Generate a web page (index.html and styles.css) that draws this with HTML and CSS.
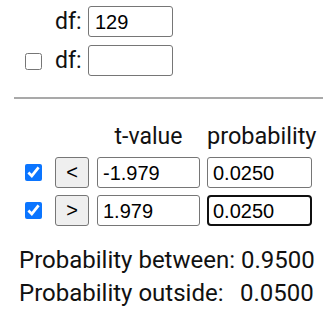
FILE: index.html
```html
<!DOCTYPE html>
<html lang="en">
<head>
  <meta charset="UTF-8">
  <title>t distribution</title>
  <link rel="stylesheet" href="styles.css">
</head>
<body>

  <div class="df-grid">
    <span></span>
    <label for="df1" class="df-label">df:</label>
    <input type="text" id="df1" class="box df-box" value="129">

    <input type="checkbox" id="useDf2" class="check">
    <label for="df2" class="df-label">df:</label>
    <input type="text" id="df2" class="box df-box" value="">
  </div>

  <hr class="rule">

  <div class="calc">
    <span></span>
    <span></span>
    <span class="head">t-value</span>
    <span class="head head-p">probability</span>

    <input type="checkbox" class="check" checked>
    <button class="dir">&lt;</button>
    <input type="text" class="box" value="-1.979">
    <input type="text" class="box" value="0.0250">

    <input type="checkbox" class="check" checked>
    <button class="dir">&gt;</button>
    <input type="text" class="box" value="1.979">
    <input type="text" class="box active" value="0.0250">
  </div>

  <table class="summary">
    <tr><td>Probability between:</td><td class="val">0.9500</td></tr>
    <tr><td>Probability outside:</td><td>0.0500</td></tr>
  </table>

</body>
</html>
```

FILE: styles.css
```css
body {
  font-family: Roboto, Arial, sans-serif;
  font-size: 23px;
  color: #111;
  margin: 0;
  padding: 6px 8px 0 14px;
  background-color: #fff;
}
.box {
  font-family: "Liberation Sans", Arial, sans-serif;
  font-size: 20px;
  color: #000;
  box-sizing: border-box;
  height: 31px;
  padding: 1px 4px 0 5px;
  border: 1px solid #767676;
  border-radius: 3px;
  margin: 0;
  outline: none;
}
.box.active {
  border: 2px solid #101010;
  padding-left: 4px;
  border-radius: 4px;
}
.check {
  width: 17px;
  height: 17px;
  margin: 0;
  accent-color: #0b75ff;
}
.df-grid {
  display: grid;
  grid-template-columns: 23px 26px 85px;
  column-gap: 7px;
  row-gap: 8px;
  align-items: center;
  margin-left: 11px;
}
.df-grid .df-box {
  padding-left: 6px;
  width: 85px;
}
.df-grid :nth-child(4) {
  margin-top: 1px;
}
.df-label {
  text-align: right;
  white-space: nowrap;
}
.rule {
  border: none;
  border-top: 2px solid #a9a9a9;
  margin: 21px 0 0;
  width: 309px;
}
.calc {
  display: grid;
  grid-template-columns: 30px 42px 110px 105px;
  row-gap: 7px;
  align-items: center;
  margin: 24px 0 0 11px;
}
.calc .head {
  text-align: center;
  line-height: 27px;
  width: 103px;
}
.calc .head-p {
  text-align: left;
  width: auto;
  margin-left: 0;
  white-space: nowrap;
  font-size: 23.5px;
}
.calc .box {
  width: 103px;
}
.calc .box:nth-child(4n) {
  width: 105px;
}
.dir {
  font-family: "Liberation Sans", Arial, sans-serif;
  font-size: 20px;
  width: 34px;
  height: 31px;
  padding: 0;
  background-color: #efefef;
  border: 1px solid #767676;
  border-radius: 3px;
  color: #000;
}
.summary {
  border-collapse: collapse;
  margin: 17px 0 0 5px;
  font-size: 24px;
}
.summary td {
  padding: 0;
  height: 33px;
  white-space: nowrap;
}
.summary td:first-child {
  width: 221px;
}
.summary .val {
  padding-left: 1px;
}
```
